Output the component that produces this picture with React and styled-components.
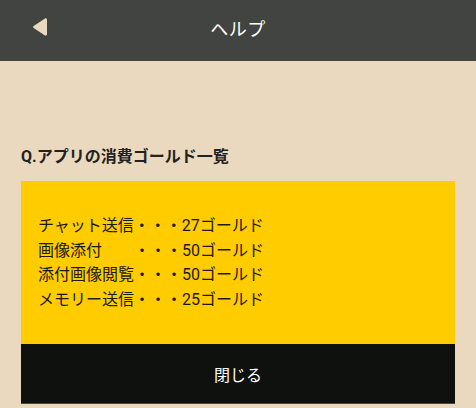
import React from "react";
import styled, { createGlobalStyle } from "styled-components";

const GlobalStyle = createGlobalStyle`
  html, body {
    margin: 0;
    padding: 0;
    background: #ead9be;
    font-family: Roboto, "Noto Sans CJK JP", sans-serif;
  }
`;

export const Page = styled.div`
  width: 476px;
  height: 408px;
  background: #ead9be;
  overflow: hidden;
`;

export const Header = styled.header`
  position: relative;
  height: 61px;
  background: #424441;
  display: flex;
  align-items: center;
  justify-content: center;
`;

export const BackButton = styled.button`
  position: absolute;
  left: 29px;
  top: 16px;
  width: 20px;
  height: 22px;
  padding: 0;
  border: none;
  background: none;
  display: flex;
  align-items: center;
  justify-content: center;
`;

export const Title = styled.h1`
  margin: 0 0 6px;
  font-size: 18px;
  font-weight: 400;
  color: #ffffff;
  letter-spacing: 0.5px;
`;

export const Content = styled.section`
  padding: 86px 21px 0;
`;

export const Question = styled.h2`
  margin: 0 0 15px;
  font-size: 16px;
  line-height: 19px;
  font-weight: 700;
  color: #222;
`;

export const Answer = styled.div`
  background: #ffcc00;
  padding: 33px 17px 32px;
`;

export const Line = styled.p`
  margin: 0;
  font-size: 16px;
  line-height: 24.5px;
  color: #1c1a10;
  white-space: pre;
`;

export const CloseButton = styled.button`
  display: block;
  width: 100%;
  height: 60px;
  border: none;
  border-bottom: 1px solid #4a4638;
  background: #0f110f;
  color: #ffffff;
  font-family: inherit;
  font-size: 16px;
  padding: 0;
`;

const lines = [
  "チャット送信・・・27ゴールド",
  "画像添付　　・・・50ゴールド",
  "添付画像閲覧・・・50ゴールド",
  "メモリー送信・・・25ゴールド",
];

const App = () => {
  return (
    <Page>
      <GlobalStyle />
      <Header>
        <BackButton aria-label="戻る">
          <svg width="15" height="20" viewBox="0 0 15 20">
            <path
              d="M13 1.5 C14 1 15 1.8 15 3 L15 17 C15 18.2 14 19 13 18.5 L2 11.3 C0.8 10.6 0.8 9.4 2 8.7 Z"
              fill="#ead9be"
            />
          </svg>
        </BackButton>
        <Title>ヘルプ</Title>
      </Header>
      <Content>
        <Question>Q.アプリの消費ゴールド一覧</Question>
        <Answer>
          {lines.map((l) => (
            <Line key={l}>{l}</Line>
          ))}
        </Answer>
        <CloseButton>閉じる</CloseButton>
      </Content>
    </Page>
  );
};

export default App;
